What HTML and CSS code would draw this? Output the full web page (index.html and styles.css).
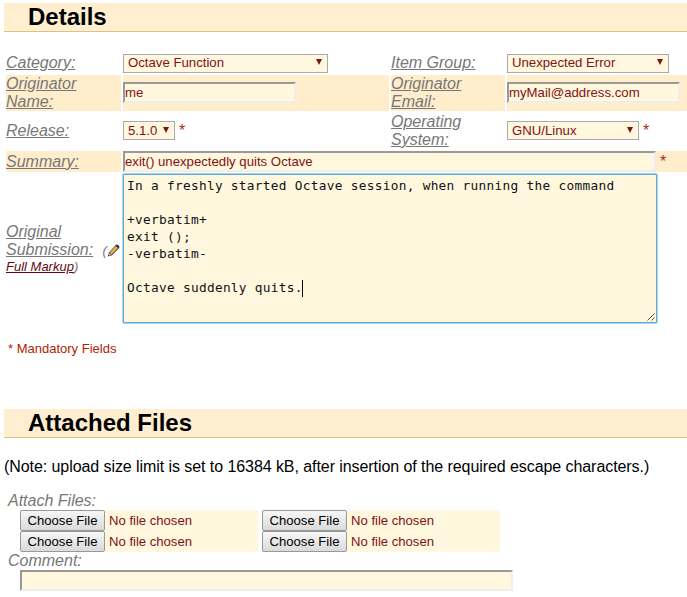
FILE: index.html
```html
<!DOCTYPE html>
<html lang="en">
<head>
<meta charset="utf-8">
<title>Details</title>
<link rel="stylesheet" href="styles.css">
</head>
<body>
<h2 class="heading">Details</h2>
<form class="details">
  <div class="cell label"><span>Category:</span></div>
  <div class="cell first"><span class="select category">Octave Function<i class="arrow"></i></span></div>
  <div class="cell label"><span>Item Group:</span></div>
  <div class="cell first"><span class="select group">Unexpected Error<i class="arrow"></i></span></div>

  <div class="cell label shaded"><span>Originator Name:</span></div>
  <div class="cell shaded"><input class="field person" type="text" value="me"></div>
  <div class="cell label shaded"><span>Originator Email:</span></div>
  <div class="cell shaded"><input class="field person" type="text" value="myMail@address.com"></div>

  <div class="cell label"><span>Release:</span></div>
  <div class="cell"><span class="select release">5.1.0<i class="arrow"></i></span><span class="star">*</span></div>
  <div class="cell label"><span>Operating System:</span></div>
  <div class="cell"><span class="select system">GNU/Linux<i class="arrow"></i></span><span class="star">*</span></div>

  <div class="cell label shaded"><span>Summary:</span></div>
  <div class="cell shaded wide"><input class="field summary" type="text" value="exit() unexpectedly quits Octave"><span class="star">*</span></div>

  <div class="cell label submission"><div><span>Original Submission:</span> <small class="markup">(<svg class="pencil" viewBox="0 0 13 13"><path d="M.8 12.4 2 8.5 8.4 1.2Q9.8 0 11.4 1.3T11.9 4.3L5 11.2Z" fill="#3b3430"/><path d="M3 9 9 2.4 11 4 4.6 10.5Z" fill="#f0b440"/><path d="M3 8.5 9 2.1" stroke="#fff0a0" stroke-width=".7"/><path d="M2.4 9.2 4.2 10.7 1.7 11.5Z" fill="#e8d4b8"/></svg></small><small class="markup-line"><a>Full Markup</a>)</small></div></div>
  <div class="cell wide top"><div class="editor">In a freshly started Octave session, when running the command

+verbatim+
exit ();
-verbatim-

Octave suddenly quits.<span class="caret"></span><svg class="grip" viewBox="0 0 8 8"><path d="M.5 7.5 7.5.5M4.5 7.5 7.5 4.5" stroke="#555" fill="none"/></svg></div></div>
</form>
<p class="mandatory">* Mandatory Fields</p>

<h2 class="heading">Attached Files</h2>
<p class="note">(Note: upload size limit is set to 16384 kB, after insertion of the required escape characters.)</p>
<div class="attach">
  <div class="caption">Attach Files:</div>
  <div class="files">
    <div class="file"><span class="choose">Choose File</span>No file chosen</div>
    <div class="file"><span class="choose">Choose File</span>No file chosen</div>
    <div class="file"><span class="choose">Choose File</span>No file chosen</div>
    <div class="file"><span class="choose">Choose File</span>No file chosen</div>
  </div>
  <div class="caption">Comment:</div>
  <input class="field comment" type="text">
</div>
</body>
</html>
```
FILE: styles.css
```css
* { box-sizing: border-box; }
body {
  margin: 0;
  padding: 3px 0 0 4px;
  height: 597px;
  overflow: hidden;
  background: #fff;
  color: #000;
  font: 16px/18px "Liberation Sans", Arial, sans-serif;
}
.heading {
  margin: 0;
  height: 29px;
  padding-left: 24px;
  background: #ffeecf;
  border-bottom: 1px solid #dcc284;
  font-size: 24px;
  line-height: 28px;
}
.details {
  display: grid;
  grid-template-columns: 115px 266px 114px 180px;
  grid-template-rows: 21px 36px 36px 21px 150px;
  gap: 2px;
  margin: 20px 0 0 2px;
}
.cell { display: flex; align-items: center; }
.first { padding-top: 2px; }
.wide { grid-column: span 3; }
.top { align-items: flex-start; }
.shaded { background: #ffedcc; }
.label { color: #777; font-style: italic; }
.label span { text-decoration: underline; }
.submission { padding-bottom: 1px; }
.markup { font-size: 13px; margin-left: 5px; white-space: nowrap; }
.markup-line { display: block; margin-top: -1px; font-size: 13px; line-height: 16px; }
.markup-line a { color: #5f0a0e; text-decoration: underline; }
.pencil { width: 13px; height: 13px; vertical-align: -2px; }
.select {
  display: flex;
  align-items: center;
  justify-content: space-between;
  height: 19px;
  margin-bottom: 1px;
  padding: 0 5px 0 4px;
  border: 1px solid #a9a9a9;
  background: #fff8df;
  color: #821014;
  font-size: 13.2px;
}
.category { width: 205px; }
.group { width: 162px; }
.release { width: 52px; }
.system { width: 132px; }
.arrow {
  border: 3px solid transparent;
  border-top: 6px solid #821014;
  border-bottom: 0;
  margin-top: -2px;
}
.star { margin-left: 4px; color: #b22d12; }
.field {
  height: 21px;
  margin: 0;
  padding: 1px 0;
  border: 2px solid;
  border-color: #999 #eee #eee #999;
  border-radius: 0;
  outline: 0;
  background: #fff8df;
  color: #821014;
  font: 13.2px "Liberation Sans", Arial, sans-serif;
}
.person { width: 173px; margin-bottom: 1px; }
.summary { width: 533px; }
.editor {
  position: relative;
  width: 534px;
  height: 149px;
  padding: 2px 3px;
  border: 1px solid #67a9cd;
  box-shadow: 0 0 0 1px #a5d6ee;
  border-radius: 1px;
  background: #fff8df;
  color: #111;
  font: 12.8px/17px "DejaVu Sans Mono", monospace;
  letter-spacing: .286px;
  white-space: pre-wrap;
}
.caret {
  display: inline-block;
  width: 1px;
  height: 17px;
  margin: 0 0 -1px -1px;
  background: #000;
  vertical-align: -4px;
}
.grip { position: absolute; right: 1px; bottom: 1px; width: 8px; height: 8px; }
.mandatory {
  margin: 16px 0 51px 4px;
  color: #b12206;
  font-size: 13px;
}
.note { margin: 20px 0 0; letter-spacing: -.07px; }
.attach { margin: 16px 0 0 4px; }
.caption { color: #777; font-style: italic; }
.files {
  display: grid;
  grid-template-columns: 238px 238px;
  column-gap: 4px;
  margin-left: 12px;
}
.file {
  display: flex;
  align-items: center;
  gap: 4px;
  height: 21px;
  background: #fff8df;
  color: #821014;
  font-size: 13.1px;
}
.choose {
  width: 85px;
  height: 21px;
  border: 1px solid #999;
  border-radius: 2px;
  background: linear-gradient(#f7f7f7, #dadada);
  color: #000;
  line-height: 19px;
  text-align: center;
}
.comment { display: block; width: 493px; margin-left: 12px; }
```
